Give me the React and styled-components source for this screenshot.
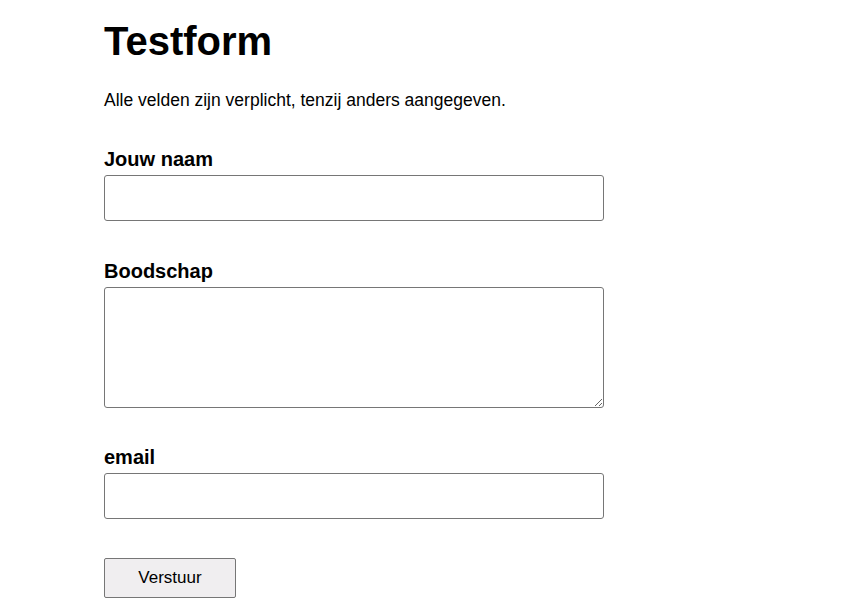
import React from "react";
import styled, { createGlobalStyle } from "styled-components";

const GlobalStyle = createGlobalStyle`
  body {
    margin: 0;
    background: #fff;
    color: #000;
    font-family: "Liberation Sans", Arial, sans-serif;
  }
`;

const Page = styled.main`
  padding: 18px 0 0 104px;
`;

const Title = styled.h1`
  margin: 0;
  font-size: 40px;
  line-height: 46px;
  font-weight: 700;
`;

const Intro = styled.p`
  margin: 26px 0 0;
  font-size: 17.5px;
  line-height: 20px;
`;

const Form = styled.form`
  display: flex;
  flex-direction: column;
  gap: 39px;
  margin-top: 38px;
  width: 500px;
`;

const Field = styled.div`
  display: flex;
  flex-direction: column;
  gap: 4px;
`;

const Label = styled.label`
  font-size: 20px;
  line-height: 23px;
  font-weight: 700;
`;

const Input = styled.input`
  box-sizing: border-box;
  width: 500px;
  height: 46px;
  border: 1px solid #767676;
  border-radius: 3px;
  font: inherit;
  padding: 0 8px;
`;

const TextArea = styled.textarea`
  box-sizing: border-box;
  width: 500px;
  height: 121px;
  margin-bottom: -1px;
  border: 1px solid #767676;
  border-radius: 3px;
  font: inherit;
  padding: 8px;
`;

const Button = styled.button`
  align-self: flex-start;
  box-sizing: border-box;
  width: 132px;
  height: 40px;
  background: #f0eef0;
  border: 1px solid #767676;
  border-radius: 2px;
  font-family: "Liberation Sans", Arial, sans-serif;
  font-size: 17px;
  color: #000;
`;

export default function App() {
  return (
    <Page>
      <GlobalStyle />
      <Title>Testform</Title>
      <Intro>Alle velden zijn verplicht, tenzij anders aangegeven.</Intro>
      <Form onSubmit={(e) => e.preventDefault()}>
        <Field>
          <Label htmlFor="naam">Jouw naam</Label>
          <Input id="naam" type="text" />
        </Field>
        <Field>
          <Label htmlFor="boodschap">Boodschap</Label>
          <TextArea id="boodschap" />
        </Field>
        <Field>
          <Label htmlFor="email">email</Label>
          <Input id="email" type="email" />
        </Field>
        <Button type="submit">Verstuur</Button>
      </Form>
    </Page>
  );
}
